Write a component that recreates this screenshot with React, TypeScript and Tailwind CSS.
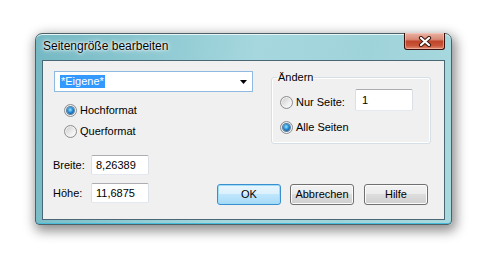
import React from "react";

function Radio({ checked }: { checked?: boolean }) {
  return (
    <span className="w-[13px] h-[13px] rounded-full border border-[#8b8d8f] bg-[linear-gradient(135deg,#c9c9c9,#f4f4f4_70%,#ffffff)] flex items-center justify-center shrink-0 shadow-[inset_0_0_0_1px_#f2f2f2]">
      {checked && (
        <span className="w-[7px] h-[7px] rounded-full bg-[radial-gradient(circle_at_45%_40%,#9be6ff_0%,#2a8fd6_45%,#0d4a86_80%,#0a3560_100%)] shadow-[0_0_0_1px_#5a7fa3]" />
      )}
    </span>
  );
}

function RadioRow({ checked, label }: { checked?: boolean; label: string }) {
  return (
    <div className="flex items-center gap-[3px] h-[13px]">
      <Radio checked={checked} />
      <span className="leading-[13px]">{label}</span>
    </div>
  );
}

function TextBox({ value, h, extra }: { value: string; h: string; extra?: string }) {
  return (
    <div
      className={`w-[58px] ${h} bg-white border border-[#abadb3] border-l-[#dbdfe6] border-r-[#dbdfe6] border-b-[#e3e9ef] rounded-[2px] pl-[4px] flex items-center shrink-0 ${extra ?? ""}`}
    >
      {value}
    </div>
  );
}

function Button({ label, def }: { label: string; def?: boolean }) {
  return (
    <div
      className={
        def
          ? "w-[64px] h-[21px] rounded-[3px] border border-[#3c8fcf] bg-[linear-gradient(#eaf6fd_0%,#d9f0fc_50%,#bee6fd_50%,#a7d9f5_100%)] shadow-[inset_0_0_0_1px_#9fdcf8] flex items-center justify-center"
          : "w-[64px] h-[21px] rounded-[3px] border border-[#707070] bg-[linear-gradient(#f2f2f2_0%,#ebebeb_50%,#dddddd_50%,#cfcfcf_100%)] shadow-[inset_0_0_0_1px_#fbfbfb] flex items-center justify-center"
      }
    >
      {label}
    </div>
  );
}

export default function App() {
  return (
    <div className="w-[495px] h-[273px] bg-white font-['Liberation_Sans',Arial,sans-serif] text-[11px] text-[#000] overflow-hidden">
      <div className="ml-[35px] pt-[33px]">
        <div className="w-[417px] h-[192px] rounded-t-[7px] rounded-b-[4px] border border-[#4f6168] bg-[linear-gradient(100deg,#74b8c3_0%,#8cc8d1_25%,#a6d7de_50%,#9fd3da_75%,#a8d9df_100%)] shadow-[2px_4px_12px_2px_rgba(0,0,0,0.45),inset_0_1px_0_#e6f5f6,inset_0_-1px_0_#47bddb] px-[6px] pb-[4px] flex flex-col">
          {/* title bar */}
          <div className="h-[26px] flex items-start shrink-0">
            <span className="ml-[1px] mt-[5px] text-[12px] leading-[14px] text-[#000] [text-shadow:0_0_6px_#ffffff,0_0_3px_#ffffff,0_0_1px_#ffffff]">
              Seitengröße bearbeiten
            </span>
            <div className="ml-auto mt-[-1px] w-[41px] h-[17px] rounded-b-[3px] border border-[#3b120b] border-t-0 bg-[linear-gradient(#eab2a4_0%,#d98a76_40%,#c0442a_52%,#c85538_78%,#e08b72_100%)] shadow-[inset_0_0_0_1px_rgba(255,210,200,0.5)] flex items-center justify-center">
              <svg width="14" height="11" viewBox="0 0 14 11">
                <path d="M3 2 L11 9 M11 2 L3 9" stroke="#3a1810" strokeWidth="4.2" strokeLinecap="round" fill="none" />
                <path d="M3 2 L11 9 M11 2 L3 9" stroke="#ffffff" strokeWidth="2.2" strokeLinecap="round" fill="none" />
              </svg>
            </div>
          </div>
          {/* client */}
          <div className="w-[403px] h-[160px] border border-[#4a6776] bg-[#f0f0f0] flex flex-col">
            <div className="flex items-start pt-[10px]">
              <div className="ml-[11px] w-[199px] flex flex-col">
                <div className="h-[21px] bg-white border border-[#8fb9e0] flex items-center pl-[5px] pr-[5px]">
                  <span className="bg-[#3399ff] text-white px-[1px] leading-[13px]">*Eigene*</span>
                  <svg className="ml-auto" width="7" height="4" viewBox="0 0 7 4">
                    <path d="M0 0 H7 L3.5 4 Z" fill="#000" />
                  </svg>
                </div>
                <div className="ml-[10px] mt-[12px] flex flex-col gap-[8px]">
                  <RadioRow checked label="Hochformat" />
                  <RadioRow label="Querformat" />
                </div>
              </div>
              <fieldset className="ml-[18px] w-[160px] border border-[#d5dfe5] rounded-[3px] px-[8px] pt-[5px] pb-[9px] shadow-[inset_0_0_0_1px_#ffffff]">
                <legend className="ml-[-3px] px-[1px] leading-[13px]">Ändern</legend>
                <div className="flex items-center">
                  <div className="flex items-center gap-[3px]">
                    <Radio />
                    <span className="leading-[13px]">Nur Seite:</span>
                  </div>
                  <TextBox value="1" h="h-[22px]" extra="ml-[10px] mb-[4px] pl-[6px]" />
                </div>
                <div className="mt-[6px]">
                  <RadioRow checked label="Alle Seiten" />
                </div>
              </fieldset>
            </div>
            <div className="flex items-start mt-[11px]">
              <div className="ml-[10px] flex flex-col gap-[8px]">
                <div className="flex items-center h-[20px]">
                  <span className="w-[38px]">Breite:</span>
                  <TextBox value="8,26389" h="h-[20px]" />
                </div>
                <div className="flex items-center h-[20px]">
                  <span className="w-[38px]">Höhe:</span>
                  <TextBox value="11,6875" h="h-[20px]" />
                </div>
              </div>
              <div className="ml-[68px] mt-[29px] flex gap-[9px]">
                <Button def label="OK" />
                <Button label="Abbrechen" />
                <div className="ml-[1px]">
                  <Button label="Hilfe" />
                </div>
              </div>
            </div>
          </div>
        </div>
      </div>
    </div>
  );
}
